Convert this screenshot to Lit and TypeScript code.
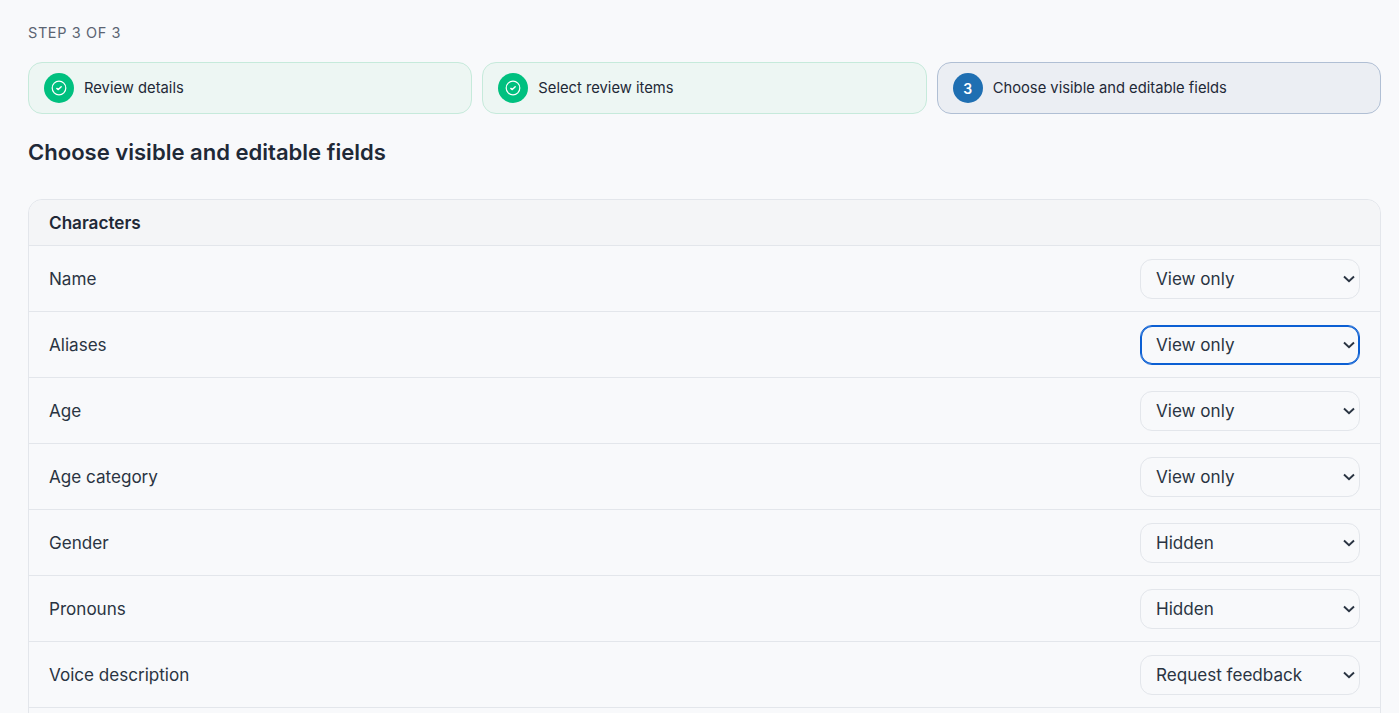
import { LitElement, html, css } from "lit";
import { customElement } from "lit/decorators.js";

const rows: [string, string, boolean?][] = [
  ["Name", "View only"],
  ["Aliases", "View only", true],
  ["Age", "View only"],
  ["Age category", "View only"],
  ["Gender", "Hidden"],
  ["Pronouns", "Hidden"],
  ["Voice description", "Request feedback"],
];
const options = ["Hidden", "View only", "Request feedback", "Editable"];

@customElement("app-root")
export class AppRoot extends LitElement {
  static styles = css`
    :host {
      display: block;
      height: 713px;
      overflow: hidden;
      background: #f8f9fb;
      color: #1f2937;
      font-family: Inter, "Liberation Sans", sans-serif;
    }
    .page {
      padding: 24px 18px 0 28px;
    }
    .eyebrow {
      font-size: 14.5px;
      line-height: 17px;
      letter-spacing: 0.6px;
      color: #5b6472;
      margin-bottom: 21px;
    }
    .steps {
      display: grid;
      grid-template-columns: repeat(3, 1fr);
      gap: 10px;
    }
    .step {
      display: flex;
      align-items: center;
      gap: 10px;
      height: 52px;
      box-sizing: border-box;
      padding: 0 15px 1px;
      border-radius: 14px;
      border: 1px solid #c6eadb;
      background: #edf6f3;
      font-size: 14.75px;
      color: #1f2937;
    }
    .step.current {
      border-color: #b0bfd4;
      background: #ebeef3;
    }
    .badge {
      width: 30px;
      height: 30px;
      border-radius: 50%;
      display: flex;
      align-items: center;
      justify-content: center;
      background: #00c07f;
      color: #fff;
      font-size: 14px;
      font-weight: 600;
      flex: none;
      margin-top: 1px;
    }
    .current .badge {
      background: #1f6fb2;
    }
    h1 {
      margin: 24px 0 33px;
      font-size: 22.06px;
      line-height: 28px;
      font-weight: 600;
      color: #1f2937;
    }
    .card {
      border: 1px solid #e3e6eb;
      border-radius: 14px 14px 0 0;
    }
    .head {
      height: 45px;
      box-sizing: border-box;
      display: flex;
      align-items: center;
      padding: 0 20px;
      background: #f4f5f7;
      border-radius: 14px 14px 0 0;
      font-size: 17.15px;
      font-weight: 600;
    }
    .row {
      height: 66px;
      box-sizing: border-box;
      display: flex;
      align-items: center;
      justify-content: space-between;
      padding: 0 20px;
      border-top: 1px solid #e3e6eb;
      font-size: 17.08px;
      color: #2a3442;
    }
    select {
      appearance: none;
      -webkit-appearance: none;
      width: 220px;
      height: 40px;
      box-sizing: border-box;
      padding: 0 28px 0 15px;
      border: 1px solid #e3e6eb;
      border-radius: 12px;
      background-color: #f8f9fb;
      background-image: url("data:image/svg+xml,%3Csvg xmlns='http://www.w3.org/2000/svg' width='12' height='8' viewBox='0 0 12 8' fill='none'%3E%3Cpath d='M1 1.5 6 6.3 11 1.5' stroke='%232a3442' stroke-width='1.9'/%3E%3C/svg%3E");
      background-repeat: no-repeat;
      background-position: right 4px center;
      color: #2a3442;
      font: inherit;
      font-size: 17.08px;
    }
    select.focus {
      border-color: #0b5fd3;
      box-shadow: inset 0 0 0 1px #0b5fd3;
    }
  `;

  render() {
    return html`
      <div class="page">
        <div class="eyebrow">STEP 3 OF 3</div>
        <div class="steps">
          ${this.step("Review details", false)}
          ${this.step("Select review items", false)}
          ${this.step("Choose visible and editable fields", true)}
        </div>
        <h1>Choose visible and editable fields</h1>
        <div class="card">
          <div class="head">Characters</div>
          ${rows.map(
            ([label, value, focus]) => html`
              <div class="row">
                <span>${label}</span>
                <select class=${focus ? "focus" : ""} .value=${value}>
                  ${options.map((o) => html`<option ?selected=${o === value}>${o}</option>`)}
                </select>
              </div>
            `
          )}
          <div class="row"></div>
        </div>
      </div>
    `;
  }

  step(label: string, current: boolean) {
    return html`
      <div class="step ${current ? "current" : ""}">
        <span class="badge">
          ${current
            ? "3"
            : html`<svg width="16" height="16" viewBox="0 0 16 16" fill="none" stroke="#fff">
                <circle cx="8" cy="8" r="6.8" stroke-width="1.2" />
                <path d="M5.8 8.4 7.3 9.6 10.2 6.8" stroke-width="1.4" stroke-linecap="round" stroke-linejoin="round" />
              </svg>`}
        </span>
        <span>${label}</span>
      </div>
    `;
  }
}
